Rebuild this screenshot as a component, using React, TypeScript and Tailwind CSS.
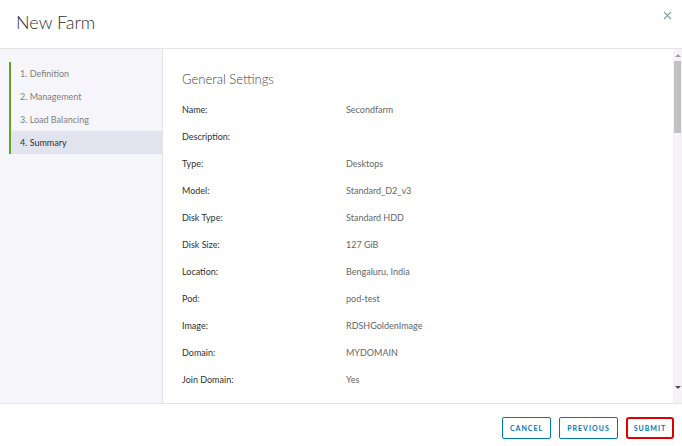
import React from 'react';

const steps = ['1. Definition', '2. Management', '3. Load Balancing', '4. Summary'];

const rows: [string, string][] = [
  ['Name:', 'Secondfarm'],
  ['Description:', ''],
  ['Type:', 'Desktops'],
  ['Model:', 'Standard_D2_v3'],
  ['Disk Type:', 'Standard HDD'],
  ['Disk Size:', '127 GiB'],
  ['Location:', 'Bengaluru, India'],
  ['Pod:', 'pod-test'],
  ['Image:', 'RDSHGoldenImage'],
  ['Domain:', 'MYDOMAIN'],
  ['Join Domain:', 'Yes'],
];

const App: React.FC = () => {
  return (
    <div className="w-[682px] h-[446px] bg-white flex flex-col overflow-hidden" style={{ fontFamily: 'Lato, "Noto Sans", sans-serif' }}>
      {/* Header */}
      <div className="h-[49px] flex items-start justify-between border-b border-[#e4e4e4] shrink-0">
        <h1 className="pl-[16px] pt-[10px] text-[18px] leading-[24px] font-light text-[#313131]">New Farm</h1>
        <svg className="mt-[11px] mr-[10px]" width="9" height="9" viewBox="0 0 9 9">
          <path d="M1 1 L8 8 M8 1 L1 8" stroke="#8c9ba5" strokeWidth="1.1" />
        </svg>
      </div>

      <div className="flex flex-1 min-h-0">
        {/* Steps */}
        <div className="w-[163px] shrink-0 bg-[#f6f6fa] border-r border-[#e4e4e4] pt-[13px]">
          <div className="ml-[9px] border-l-[2px] border-[#62a420]">
            {steps.map((s, i) => (
              <div
                key={s}
                className={`h-[23px] flex items-center pl-[9px] text-[9px] ${
                  i === 3 ? 'bg-[#e1e4ee] text-[#313131]' : 'text-[#808080]'
                }`}
              >
                {s}
              </div>
            ))}
          </div>
        </div>

        {/* Summary */}
        <div className="flex-1 pl-[19px] pt-[22px]">
          <h2 className="text-[13px] leading-[16px] font-light text-[#454545]">General Settings</h2>
          <div className="mt-[9px]">
            {rows.map(([label, value]) => (
              <div key={label} className="h-[27px] flex items-center text-[9px]">
                <span className="w-[164px] text-[#313131]">{label}</span>
                <span className="text-[#666666]">{value}</span>
              </div>
            ))}
          </div>
        </div>

        {/* Scrollbar */}
        <div className="w-[9px] shrink-0 bg-[#f7f2f6] flex flex-col items-center pb-[14px]">
          <div className="h-[12px] flex items-center">
            <div className="w-0 h-0 border-l-[3px] border-r-[3px] border-b-[3px] border-l-transparent border-r-transparent border-b-[#a0a0a0]" />
          </div>
          <div className="w-[7px] h-[72px] bg-[#c1c1c1]" />
          <div className="flex-1" />
          <div className="w-0 h-0 border-l-[3px] border-r-[3px] border-t-[3px] border-l-transparent border-r-transparent border-t-[#505050]" />
        </div>
      </div>

      {/* Footer */}
      <div className="h-[43px] shrink-0 border-t border-[#e4e4e4] flex items-start justify-end gap-[8px] pt-[13px] pr-[8px]">
        <button className="h-[22px] w-[49px] border border-[#0079b8] rounded-[2px] text-[#0079b8] text-[7px] font-bold tracking-[1px]">
          CANCEL
        </button>
        <button className="h-[22px] w-[59px] border border-[#0079b8] rounded-[2px] text-[#0079b8] text-[7px] font-bold tracking-[1px]">
          PREVIOUS
        </button>
        <button className="h-[22px] w-[48px] border-[2px] border-[#e00000] rounded-[3px] text-[#0079b8] text-[7px] font-bold tracking-[1px]">
          SUBMIT
        </button>
      </div>
    </div>
  );
};

export default App;
